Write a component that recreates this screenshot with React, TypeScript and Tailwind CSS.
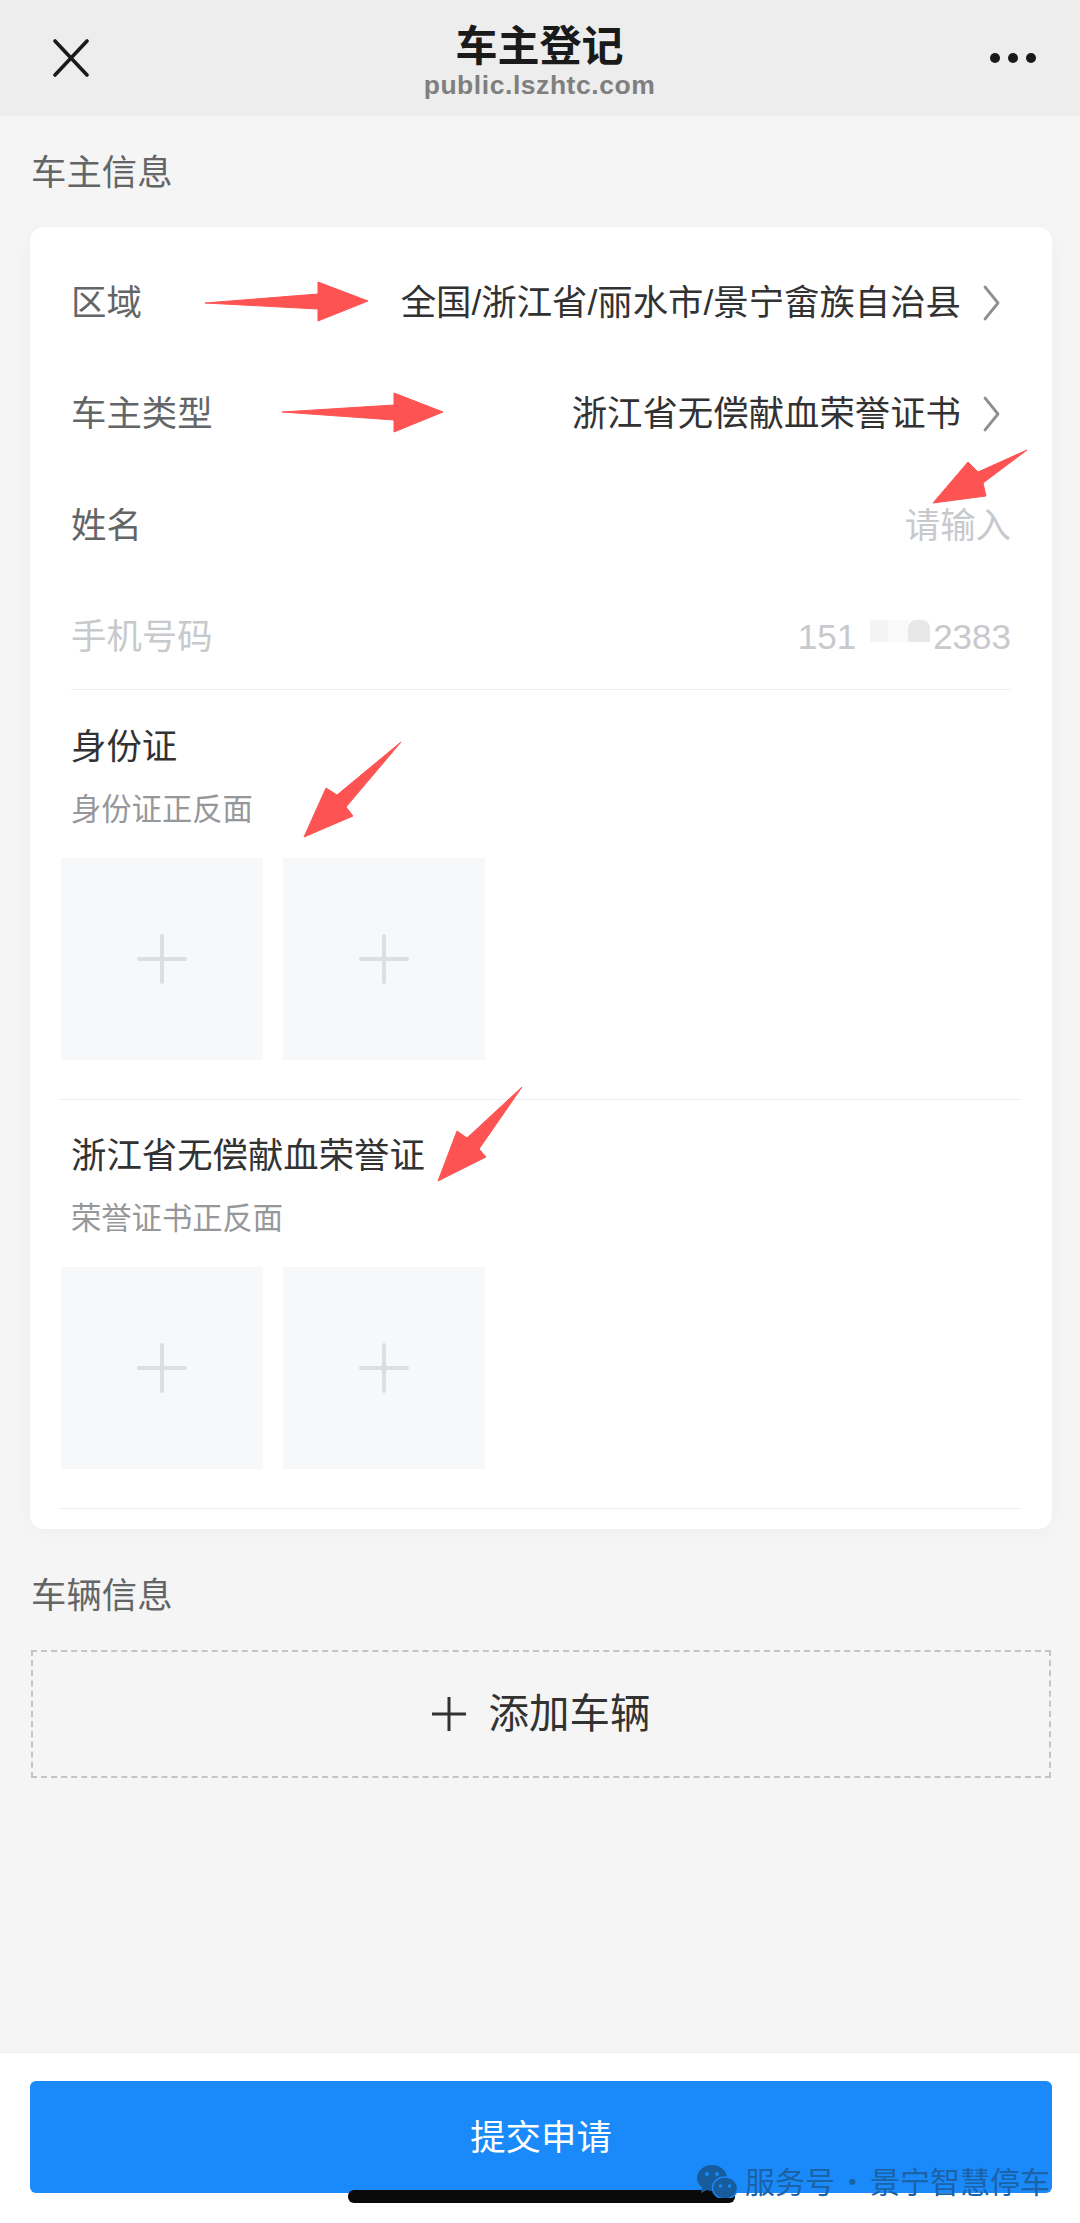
const font = "font-['Liberation_Sans','Noto_Sans_CJK_SC',sans-serif]";

function Chevron() {
    return (
        <svg className="ml-[22px] mr-[11px]" width="17" height="36" viewBox="0 0 17 36" fill="none" stroke="#8f8f8f" strokeWidth="2.800" strokeLinecap="round" strokeLinejoin="round">
            <path d="M2 2L15 18L2 34" />
        </svg>
    );
}

function FormRow({ label, value, arrow, dim, placeholder }: { label: string; value: React.ReactNode; arrow?: boolean; dim?: boolean; placeholder?: boolean }) {
    return (
        <div className="flex h-[111px] items-center justify-between text-[35.4px] leading-[50px] [&:nth-child(3)]:mt-[1px]">
            <span className={dim ? "text-[#c8c9cc]" : "text-[#646566]"}>{label}</span>
            <div className="flex items-center">
                <span className={placeholder || dim ? "text-[#c8c9cc]" : "text-[#323233]"}>{value}</span>
                {arrow && <Chevron />}
            </div>
        </div>
    );
}

function UploadBox() {
    return (
        <div className="flex h-[202px] w-[202px] items-center justify-center bg-[#f7f8fa]">
            <svg width="50" height="50" viewBox="0 0 50 50" fill="none" stroke="#dcdee0" strokeWidth="4" strokeLinecap="round">
                <path d="M25 2V48M2 25H48" />
            </svg>
        </div>
    );
}

function UploadSection({ title, hint }: { title: string; hint: string }) {
    return (
        <div className="ml-[30px] mr-[31px] border-b border-[#ebedf0] pb-[39px] pt-[31px]">
            <div className="pl-[11px] text-[35.4px] leading-[50px] text-[#323233]">{title}</div>
            <div className="mt-[18px] pl-[11px] text-[30.3px] leading-[40px] text-[#969799]">{hint}</div>
            <div className="mt-[28px] flex gap-[20px] pl-[1px]">
                <UploadBox />
                <UploadBox />
            </div>
        </div>
    );
}

function PhoneNumber() {
    return (
        <span className="flex items-center text-[35px]">
            151
            <span className="mb-[12px] flex h-[22px] w-[77px] items-stretch pl-[14px] pr-[3px]">
                <span className="w-[18px] bg-[#f4f4f4]" />
                <span className="w-[20px] bg-[#f9f9f9]" />
                <span className="w-[22px] rounded-t-[8px] bg-[#e8e8e8]" />
            </span>
            2383
        </span>
    );
}

// red annotation arrows sit on top of the screenshot
const arrows = [
    "205,303 318,294 318,282 368,301 318,321 318,309",
    "282,412 394,405 394,393 443,412 394,432 394,420",
    "1027,450 978,472 968,462 933,503 986,496 983,483",
    "401,742 346,807 353,816 304,837 326,788 337,795",
    "522,1087 479,1149 486,1157 438,1181 457,1131 467,1138",
];

export default function App() {
    return (
        <div lang="zh-CN" className={`${font} relative flex h-[2223px] w-[1080px] flex-col overflow-hidden bg-[#f5f5f5]`}>
            <header className="flex h-[116px] shrink-0 items-center justify-between bg-[#ededed] pl-[53px] pr-[44px]">
                <svg width="36" height="38" viewBox="0 0 36 38" fill="none" stroke="#1a1a1a" strokeWidth="3.600" strokeLinecap="round">
                    <path d="M2 2L34 36M34 2L2 36" />
                </svg>
                <div className="flex flex-col items-center">
                    <div className="mt-[1px] text-[42px] font-bold leading-[58px] text-[#1a1a1a]">车主登记</div>
                    <div className="mt-[-6px] text-[26.500px] font-bold leading-[30px] tracking-[0.55px] text-[#7f7f7f]">public.lszhtc.com</div>
                </div>
                <div className="flex items-center gap-[8px]">
                    <span className="h-[10px] w-[10px] rounded-full bg-[#1a1a1a]" />
                    <span className="h-[10px] w-[10px] rounded-full bg-[#1a1a1a]" />
                    <span className="h-[10px] w-[10px] rounded-full bg-[#1a1a1a]" />
                </div>
            </header>

            <main className="flex-1 pl-[30px] pr-[28px]">
                <div className="mb-[29px] mt-[32px] pl-[1px] text-[35.4px] leading-[50px] text-[#646566]">车主信息</div>
                <section className="rounded-[14px] bg-white pb-[20px] pt-[20px] shadow-[0_4px_20px_rgba(0,0,0,0.03)]">
                    <div className="mx-[41px] mb-[1px] h-[443px] border-b border-[#ebedf0]">
                        <FormRow label="区域" value="全国/浙江省/丽水市/景宁畲族自治县" arrow />
                        <FormRow label="车主类型" value="浙江省无偿献血荣誉证书" arrow />
                        <FormRow label="姓名" value="请输入" placeholder />
                        <FormRow label="手机号码" value={<PhoneNumber />} dim />
                    </div>
                    <UploadSection title="身份证" hint="身份证正反面" />
                    <UploadSection title="浙江省无偿献血荣誉证" hint="荣誉证书正反面" />
                </section>

                <div className="mb-[29px] mt-[42px] pl-[1px] text-[35.4px] leading-[50px] text-[#646566]">车辆信息</div>
                <button className="ml-[1px] flex h-[128px] w-[1020px] items-center justify-center gap-[23px] border-2 border-dashed border-[#c4c4c4] text-[40.500px] text-[#323233]">
                    <svg width="34" height="34" viewBox="0 0 34 34" fill="none" stroke="#323233" strokeWidth="3">
                        <path d="M17 0V34M0 17H34" />
                    </svg>
                    添加车辆
                </button>
            </main>

            <footer className="h-[171px] shrink-0 border-t border-[#eeeeee] bg-white pl-[30px] pr-[28px] pt-[28px]">
                <button className="flex h-[112px] w-full items-center justify-center rounded-[6px] bg-[#1a8afa] pt-[3px] text-[35.4px] text-white">提交申请</button>
            </footer>

            <div className="absolute left-[348px] top-[2190px] h-[13px] w-[387px] rounded-[6px] bg-[#0a0a0a]" />

            {/* watermark */}
            <div className="absolute left-[697px] top-[2160px] flex items-center gap-[8px] font-['Noto_Sans_CJK_SC',sans-serif] text-[30px] leading-[40px] text-[#1b62a6]">
                <svg width="40" height="36" viewBox="0 0 40 36">
                    <path d="M15 3C7 3 0 8.500 0 16C0 20 2 23 5 25.500L4 31L10 28C12 28.700 13.500 29 15 29C23 29 30 23 30 16C30 8.500 23 3 15 3Z" fill="#175c9d" />
                    <ellipse cx="28" cy="26" rx="12.500" ry="11" fill="#175c9d" stroke="#1a8afa" strokeWidth="1.500" />
                    <circle cx="10" cy="12" r="2" fill="#1a8afa" />
                    <circle cx="20" cy="12" r="2" fill="#1a8afa" />
                    <circle cx="23.500" cy="24" r="1.700" fill="#1a8afa" />
                    <circle cx="32.500" cy="24" r="1.700" fill="#1a8afa" />
                </svg>
                <div className="flex">
                    <span>服务号</span>
                    <span className="w-[35px] text-center">·</span>
                    <span>景宁智慧停车</span>
                </div>
            </div>

            <svg className="pointer-events-none absolute left-0 top-0" width="1080" height="2223" viewBox="0 0 1080 2223">
                {arrows.map((points) => (
                    <polygon key={points} points={points} fill="#fd5353" stroke="#fd5353" strokeWidth="1" strokeLinejoin="round" />
                ))}
            </svg>
        </div>
    );
}
